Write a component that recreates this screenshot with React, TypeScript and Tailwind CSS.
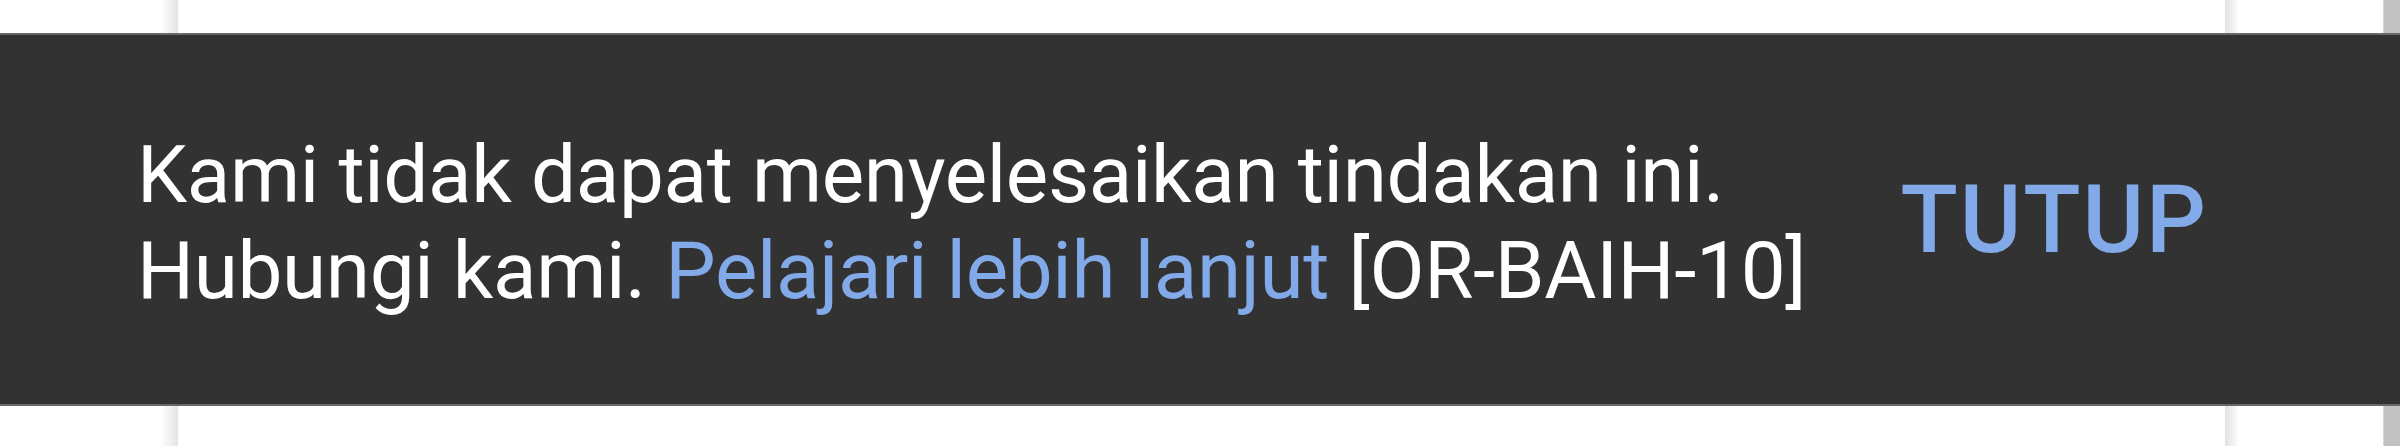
import React from "react";

export default function App() {
  return (
    <div className="relative w-[2400px] h-[446px] overflow-hidden bg-white" style={{ fontFamily: "Roboto, 'Noto Sans', sans-serif" }}>
      {/* background page */}
      <div className="flex h-full w-full">
        <div className="w-[160px] bg-white" />
        <div className="w-[18px] bg-gradient-to-r from-white to-[#e4e4e4]" />
        <div className="flex-1 bg-white" />
        <div className="w-[15px] bg-gradient-to-r from-[#e2e2e2] to-white" />
        <div className="w-[143px] bg-white" />
        <div className="w-[17px] bg-[#c1c1c1] border-l border-[#d6d6d6]" />
      </div>
      {/* snackbar */}
      <div className="absolute left-0 right-0 top-[33px] h-[373px] bg-[#323232] border-y-2 border-[#8c8c8c]/60 flex items-center pl-[137px] pr-[192px]">
        <div className="flex-1 pt-[6px] text-white text-[80px] leading-[96px] tracking-[-0.35px]">
          <div>Kami tidak dapat menyelesaikan tindakan ini.</div>
          <div>
            Hubungi kami. <span className="text-[#82a9e8]">Pelajari lebih lanjut</span> [OR-BAIH-10]
          </div>
        </div>
        <div className="text-[#82a9e8] text-[94px] font-medium leading-none tracking-[2px]">TUTUP</div>
      </div>
    </div>
  );
}
